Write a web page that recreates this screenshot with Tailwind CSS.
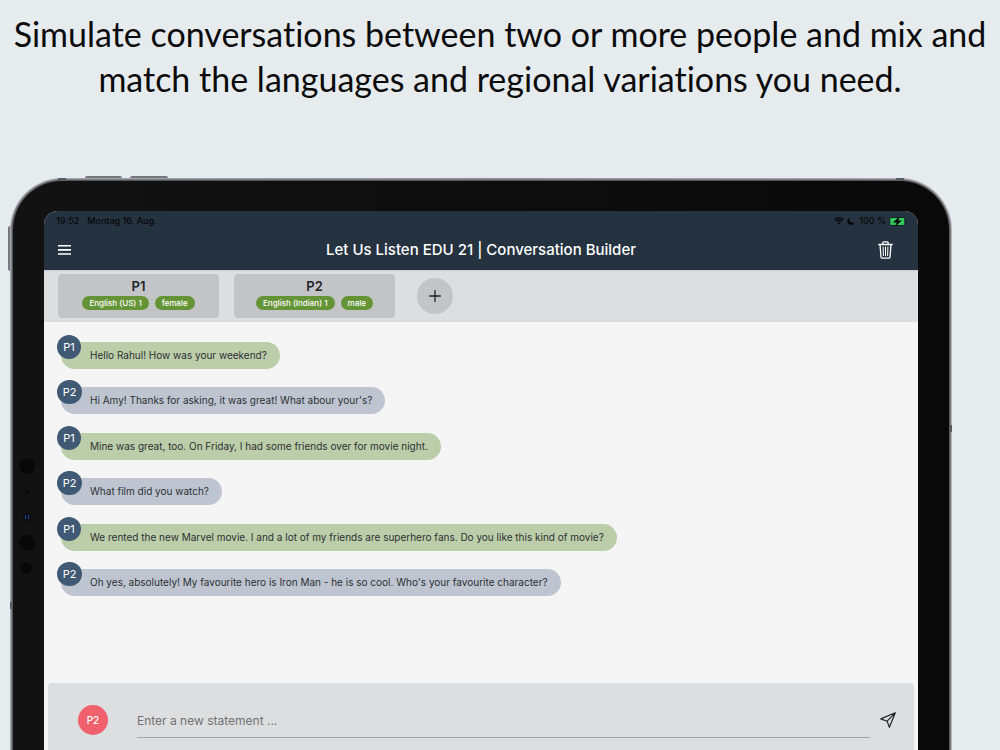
<!DOCTYPE html>
<html lang="en">
  <head>
    <meta charset="UTF-8" />
    <meta name="viewport" content="width=device-width, initial-scale=1.0" />
    <title>Let Us Listen EDU 21 | Conversation Builder</title>
    <script src="https://cdn.jsdelivr.net/npm/@tailwindcss/browser@4"></script>
  </head>
  <body class="flex flex-col h-screen overflow-hidden bg-[#e6ebee] font-[Inter,sans-serif] text-[#222428]">
    <h1 class="pt-[11px] text-center text-[34px] leading-[45px] text-[#0b0b0b] font-[Lato,sans-serif] [font-variant-ligatures:none]">
      Simulate conversations between two or more people and mix and<br />
      match the languages and regional variations you need.
    </h1>

    <!-- Tablet -->
    <div class="relative flex flex-col flex-1 mt-[77px] ml-[10px] mr-12">
      <!-- Side and top buttons -->
      <span class="absolute -top-0.5 left-[75px] w-[37px] h-1 rounded-sm bg-[#77777b]"></span>
      <span class="absolute -top-0.5 left-[120px] w-[38px] h-1 rounded-sm bg-[#77777b]"></span>
      <span class="absolute top-12 -left-0.5 w-1 h-[45px] rounded-sm bg-[#77777b]"></span>

      <div class="relative flex flex-1 rounded-t-[52px] bg-linear-to-r from-[#a9adb1] via-[#8d8d92] to-[#b5b3b9] pt-px px-px">
        <div class="flex flex-1 rounded-t-[51px] bg-[#7d7e83] pt-px px-px">
          <div class="flex flex-1 rounded-t-[50px] bg-[#56575b] pt-px px-px">
            <div class="flex flex-1 rounded-t-[49px] bg-linear-to-r from-[#121212] to-[#090909] pt-[30px] px-[31px]">

              <!-- Screen -->
              <div class="flex flex-col flex-1 min-w-0 rounded-t-[14px] overflow-hidden bg-[#f5f5f5]">
                <header class="bg-[#25323f] h-[59px]">
                  <div class="flex items-center justify-between h-5 pl-3 pr-[11px] text-[9px] leading-3 font-medium text-[#05080b]">
                    <div class="flex gap-2">
                      <span>19:52</span>
                      <span>Montag 16. Aug.</span>
                    </div>
                    <div class="flex items-center gap-[3px]">
                      <svg class="w-[10px] h-[8px]" viewBox="0 0 20 16" fill="none" stroke="currentColor" stroke-width="2.8">
                        <path d="M1.2 5.5a12.5 12.5 0 0 1 17.6 0" />
                        <path d="M4.6 9a7.7 7.7 0 0 1 10.8 0" />
                        <path d="M10 15l-3.2-3.2a4.6 4.6 0 0 1 6.4 0z" fill="currentColor" stroke="none" />
                      </svg>
                      <svg class="w-2 h-2" viewBox="0 0 16 16" fill="currentColor">
                        <path d="M5 1a8 8 0 0 0 10.5 10A7.8 7.8 0 1 1 5 1z" />
                      </svg>
                      <span class="ml-px">100 %</span>
                      <svg class="w-[18px] h-[9px]" viewBox="0 0 36 18">
                        <rect x="1" y="1" width="31" height="16" rx="4" fill="#25323f" stroke="#121c22" stroke-width="1.6" />
                        <rect x="2.5" y="2" width="28" height="14" rx="2.5" fill="#34c759" />
                        <path d="M33.5 6.5v5c2.5-1 2.5-4 0-5z" fill="#121c22" />
                        <path d="M20 0L9 10.500h7L13 18 24.500 7.500H18z" fill="#05080b" stroke="#05080b" />
                      </svg>
                    </div>
                  </div>
                  <div class="grid grid-cols-[1fr_auto_1fr] items-center h-[38px] pl-[14px] pr-[25px] text-white">
                    <button aria-label="Menu" class="justify-self-start">
                      <svg class="w-[13px] h-[10px]" viewBox="0 0 13 10" fill="currentColor">
                        <path d="M0 0h13v1.600H0zM0 4.100h13v1.600H0zM0 8.200h13v1.600H0z" />
                      </svg>
                    </button>
                    <h2 class="pl-[11px] text-[15px] leading-5 font-medium">Let Us Listen EDU 21 | Conversation Builder</h2>
                    <button aria-label="Delete" class="justify-self-end">
                      <svg class="w-[15px] h-[18px]" viewBox="0 0 15 18" fill="none" stroke="currentColor" stroke-width="1.3" stroke-linecap="round" stroke-linejoin="round">
                        <path d="M.8 3.500h13.400M2 3.500l1 12.400a1.300 1.300 0 0 0 1.300 1.300h6.400a1.300 1.300 0 0 0 1.300-1.300l1-12.400" />
                        <path d="M4.800 3.300V2A1.200 1.200 0 0 1 6 .8h3A1.200 1.200 0 0 1 10.200 2v1.300" />
                        <path d="M7.500 6v8.700M5.100 6l.3 8.700M9.900 6l-.3 8.700" stroke-width="1" />
                      </svg>
                    </button>
                  </div>
                </header>

                <!-- Speakers -->
                <section class="flex items-start gap-[15px] h-[52px] pt-[3px] pl-[14px] border-t border-[#c9cbcf] bg-[#dddee0]">
                  <div class="flex flex-col items-center w-[161px] h-11 pt-1 rounded bg-[#c3c4c6]">
                    <h3 class="text-[13px] leading-4 font-semibold">P1</h3>
                    <div class="flex gap-1.5 mt-0.5 text-[8px] leading-[14px] font-medium text-white">
                      <span class="px-[7px] rounded-full bg-[#649436]">English (US) 1</span>
                      <span class="px-[7px] rounded-full bg-[#649436]">female</span>
                    </div>
                  </div>
                  <div class="flex flex-col items-center w-[161px] h-11 pt-1 rounded bg-[#c3c4c6]">
                    <h3 class="text-[13px] leading-4 font-semibold">P2</h3>
                    <div class="flex gap-1.5 mt-0.5 text-[8px] leading-[14px] font-medium text-white">
                      <span class="px-[7px] rounded-full bg-[#649436]">English (Indian) 1</span>
                      <span class="px-[7px] rounded-full bg-[#649436]">male</span>
                    </div>
                  </div>
                  <button aria-label="Add speaker" class="flex items-center justify-center size-9 mt-1 ml-[7px] rounded-full bg-[#c3c4c6]">
                    <svg class="size-3" viewBox="0 0 12 12" stroke="currentColor" stroke-width="1.3" stroke-linecap="round">
                      <path d="M6 .6v10.800M.6 6h10.800" />
                    </svg>
                  </button>
                </section>

                <!-- Conversation -->
                <ul class="flex flex-col justify-between items-start h-[274px] pt-5 pl-[17px] text-[10px] leading-[27px] text-[#2c3034]">
                  <li class="relative pl-[29px] pr-[13px] rounded-[14px] bg-[#bccda9]">
                    <span class="absolute -top-[7px] -left-1 size-6 rounded-full bg-[#405a75] text-center text-[11px] leading-6 text-white">P1</span>
                    Hello Rahul! How was your weekend?
                  </li>
                  <li class="relative pl-[29px] pr-[13px] rounded-[14px] bg-[#bec5d0]">
                    <span class="absolute -top-[7px] -left-1 w-[25px] h-6 rounded-full bg-[#405a75] text-center text-[11px] leading-6 text-white">P2</span>
                    Hi Amy! Thanks for asking, it was great! What abour your's?
                  </li>
                  <li class="relative pl-[29px] pr-[13px] rounded-[14px] bg-[#bccda9]">
                    <span class="absolute -top-[7px] -left-1 size-6 rounded-full bg-[#405a75] text-center text-[11px] leading-6 text-white">P1</span>
                    Mine was great, too. On Friday, I had some friends over for movie night.
                  </li>
                  <li class="relative pl-[29px] pr-[13px] rounded-[14px] bg-[#bec5d0]">
                    <span class="absolute -top-[7px] -left-1 w-[25px] h-6 rounded-full bg-[#405a75] text-center text-[11px] leading-6 text-white">P2</span>
                    What film did you watch?
                  </li>
                  <li class="relative pl-[29px] pr-[13px] rounded-[14px] bg-[#bccda9]">
                    <span class="absolute -top-[7px] -left-1 size-6 rounded-full bg-[#405a75] text-center text-[11px] leading-6 text-white">P1</span>
                    We rented the new Marvel movie. I and a lot of my friends are superhero fans. Do you like this kind of movie?
                  </li>
                  <li class="relative pl-[29px] pr-[13px] rounded-[14px] bg-[#bec5d0]">
                    <span class="absolute -top-[7px] -left-1 w-[25px] h-6 rounded-full bg-[#405a75] text-center text-[11px] leading-6 text-white">P2</span>
                    Oh yes, absolutely! My favourite hero is Iron Man - he is so cool. Who's your favourite character?
                  </li>
                </ul>

                <!-- New statement -->
                <form class="flex items-start mt-auto mx-1 h-[67px] pt-[22px] pl-[30px] pr-[18px] rounded-t bg-[#dddee0]">
                  <button type="button" class="size-[30px] rounded-full bg-[#f0616d] text-[10px] font-medium text-white">P2</button>
                  <input type="text" aria-label="New statement" placeholder="Enter a new statement ..." class="flex-1 min-w-0 h-[33px] ml-[29px] border-b border-[#a3a5a8] pb-0.5 text-xs placeholder:text-[#707276] outline-none" />
                  <button type="submit" aria-label="Send" class="ml-[10px] mt-[7px]">
                    <svg class="size-4" viewBox="0 0 16 16" fill="none" stroke="currentColor" stroke-width="1.2" stroke-linejoin="round" stroke-linecap="round">
                      <path d="M15.300.8L.8 6.900l6.300 2.300 2.300 6.100zM15.300.8L7.100 9.200" />
                    </svg>
                  </button>
                </form>
              </div>
            </div>
          </div>
        </div>
      </div>

      <!-- Camera and sensors -->
      <span class="absolute top-[280px] left-[9px] size-4 rounded-full bg-[#080808]"></span>
      <span class="absolute top-[312px] left-[15px] size-1 rounded-full bg-[#0a0a0a]"></span>
      <span class="absolute top-[335px] left-[13px] flex items-center justify-center gap-0.5 size-2 rounded-full bg-[#0b0e16]">
        <i class="w-px h-1 bg-[#1c4790]"></i>
        <i class="w-px h-1 bg-[#1c4790]"></i>
      </span>
      <span class="absolute top-[357px] left-[9px] size-4 rounded-full bg-[#080808]"></span>
      <span class="absolute top-[384px] left-[10px] size-3 rounded-full bg-[#080808]"></span>

      <!-- Antenna bands -->
      <span class="absolute top-0 left-[48px] w-2 h-[3px] bg-[#5c5d61]"></span>
      <span class="absolute top-0 right-[48px] w-2 h-[3px] bg-[#5c5d61]"></span>
      <span class="absolute top-[247px] right-0 w-[3px] h-[7px] bg-[#5c5d61]"></span>
      <span class="absolute top-[424px] left-0 w-[3px] h-[7px] bg-[#5c5d61]"></span>
    </div>
  </body>
</html>
